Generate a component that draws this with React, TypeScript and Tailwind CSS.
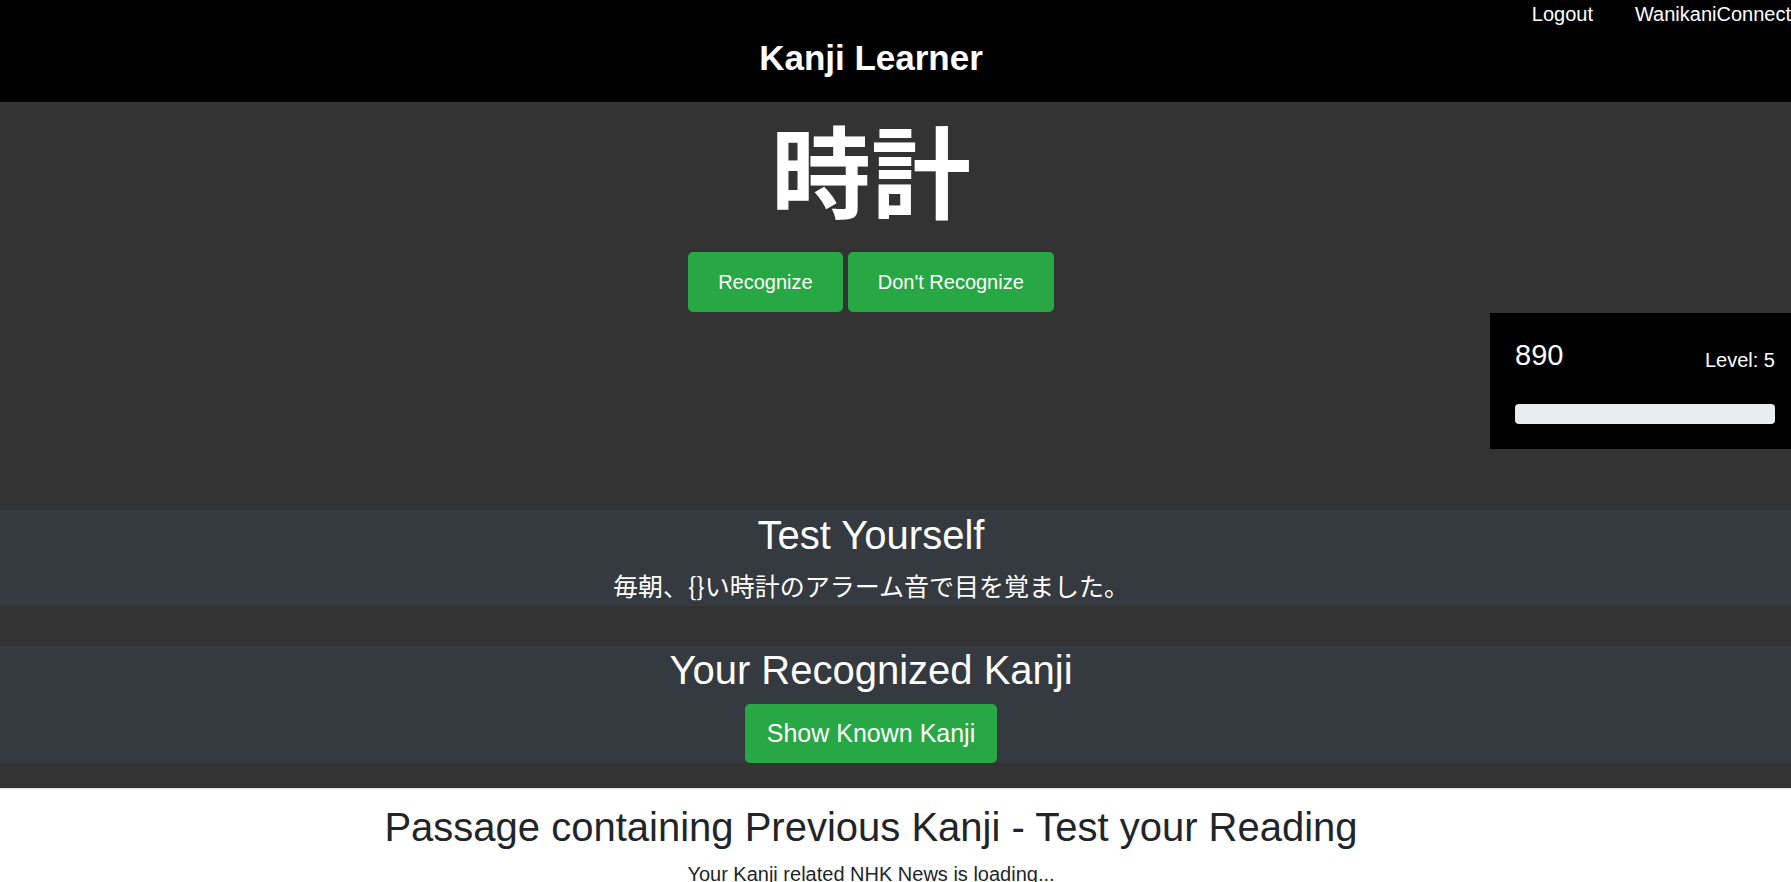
import React from "react";

export default function App() {
  return (
    <div className="relative min-h-screen overflow-hidden bg-white font-['Liberation_Sans','Noto_Sans_CJK_JP',sans-serif]">
      {/* header */}
      <header className="bg-black text-white h-[102px] pt-[3px]">
        <nav className="flex justify-end gap-[42px] text-[20px] leading-[23px] whitespace-nowrap">
          <a className="cursor-pointer">Logout</a>
          <a className="cursor-pointer">WanikaniConnect</a>
        </nav>
        <h1 className="mt-[12px] pr-[49px] text-center text-[35px] leading-[40px] font-bold">Kanji Learner</h1>
      </header>

      {/* current kanji */}
      <section className="bg-[#333333] text-white pt-[16px]">
        <div className="pr-[49px] flex flex-col items-center">
          <div className="text-[100px] leading-none font-bold font-['Noto_Sans_CJK_JP',sans-serif]">時計</div>
          <div className="mt-[34px] flex gap-[5px]">
            <button className="h-[60px] px-[30px] rounded-[5px] bg-[#28a745] text-[20px] text-white">Recognize</button>
            <button className="h-[60px] px-[30px] rounded-[5px] bg-[#28a745] text-[20px] text-white">Don't Recognize</button>
          </div>
        </div>

        <div className="mt-[198px] bg-[#343a40] pt-[2px] pb-[4px]">
          <div className="pr-[49px] text-center">
            <h2 className="text-[40px] leading-[46px]">Test Yourself</h2>
            <p className="mt-[10px] text-[25px] leading-[34px] font-['Noto_Sans_CJK_JP',sans-serif]">毎朝、{"{}"}い時計のアラーム音で目を覚ました。</p>
          </div>
        </div>

        <div className="mt-[40px] bg-[#343a40] pt-[1px]">
          <div className="pr-[49px] flex flex-col items-center">
            <h2 className="text-[40px] leading-[46px]">Your Recognized Kanji</h2>
            <button className="mt-[11px] h-[59px] px-[22px] rounded-[5px] bg-[#28a745] text-[25px] text-white">Show Known Kanji</button>
          </div>
        </div>
        <div className="h-[25px]"></div>
      </section>

      {/* passage */}
      <section className="border-t border-[#dee2e6] bg-white text-[#212529] pt-[15px] pr-[49px] text-center">
        <h2 className="text-[40px] leading-[46px]">Passage containing Previous Kanji - Test your Reading</h2>
        <p className="mt-[13px] text-[20px] leading-[23px]">Your Kanji related NHK News is loading...</p>
      </section>

      {/* score box */}
      <div className="absolute right-0 top-[313px] w-[301px] bg-black text-white pl-[25px] pr-[16px] pt-[26px] pb-[25px]">
        <div className="flex items-end justify-between">
          <span className="text-[29px] leading-[32px]">890</span>
          <span className="text-[20px] leading-[22px]">Level: 5</span>
        </div>
        <div className="mt-[33px] h-[20px] rounded-[4px] bg-[#e9ecef]"></div>
      </div>
    </div>
  );
}
